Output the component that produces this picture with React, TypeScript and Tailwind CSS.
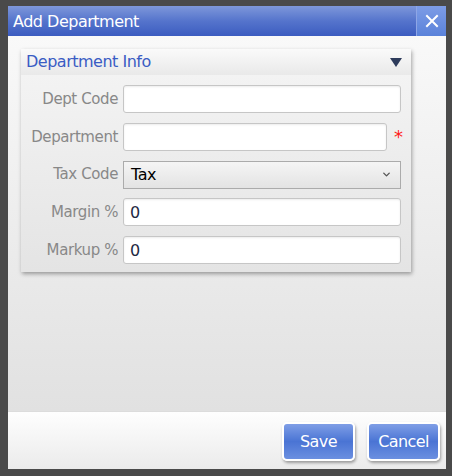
import { ChevronDown } from 'lucide-react';

const font = { fontFamily: '"DejaVu Sans", Verdana, sans-serif' };

type Field = { label: string; value?: string; kind?: 'select'; required?: boolean };

const fields: Field[] = [
  { label: 'Dept Code' },
  { label: 'Department', required: true },
  { label: 'Tax Code', value: 'Tax', kind: 'select' },
  { label: 'Margin %', value: '0' },
  { label: 'Markup %', value: '0' },
];

function FieldRow({ field }: { field: Field }) {
  return (
    <div className="flex h-[28px] items-center">
      <label className="w-[102px] shrink-0 pr-[5px] text-right text-[15px] tracking-[-0.4px] text-[#888]">
        {field.label}
      </label>
      {field.kind === 'select' ? (
        <div className="flex h-[28px] w-[278px] items-center justify-between border border-[#ababab] bg-gradient-to-b from-[#f5f5f5] to-[#e3e3e3] pl-[7px] pr-[8px] text-[16px] tracking-[-0.5px] text-black">
          <span>{field.value}</span>
          <ChevronDown className="h-[11px] w-[11px] text-[#555]" strokeWidth={3} />
        </div>
      ) : (
        <div className="flex items-center">
          <input
            readOnly
            value={field.value ?? ''}
            className={`h-[28px] ${field.required ? 'w-[264px]' : 'w-[278px]'} rounded-[3px] border border-[#c6c6c6] bg-white px-[6px] text-[16px] text-[#1f2a44] shadow-[inset_0_1px_2px_rgba(0,0,0,0.08)] outline-none`}
            style={font}
          />
          {field.required && <span className="ml-[7px] text-[18px] leading-none text-[#ff1a1a]">*</span>}
        </div>
      )}
    </div>
  );
}

export default function App() {
  return (
    <div className="h-[476px] w-[452px] bg-[#4a4a4a] pl-[8px] pt-[6px]" style={font}>
      <div className="flex h-[463px] w-[438px] flex-col">
        <div className="flex h-[30px] bg-gradient-to-b from-[#7e97da] via-[#5574cc] to-[#3c5cc0]">
          <div className="flex-1 pl-[5px] pt-[4px] text-[16px] tracking-[-0.5px] text-white">Add Department</div>
          <button className="flex w-[30px] items-center justify-center border-l border-[#8ea6e6] bg-gradient-to-b from-[#7d9ce6] to-[#5a82da]">
            <svg width="14" height="14" viewBox="0 0 14 14">
              <path d="M2 2 L12 12 M12 2 L2 12" stroke="white" strokeWidth="2" strokeLinecap="square" />
            </svg>
          </button>
        </div>

        <div className="flex-1 bg-gradient-to-b from-[#f9f9f9] to-[#e1e1e1] pl-[13px] pt-[13px]">
          <div className="w-[390px] shadow-[1px_2px_4px_rgba(0,0,0,0.35)]">
            <div className="flex h-[26px] items-center justify-between bg-gradient-to-b from-[#fafafa] to-[#e9e9e9] pl-[5px] pr-[9px]">
              <span className="text-[16px] tracking-[-0.5px] text-[#3a5cc4]">Department Info</span>
              <svg width="12" height="9" viewBox="0 0 12 9">
                <path d="M0 0 H12 L6 9 Z" fill="#2e3c5c" />
              </svg>
            </div>
            <div className="flex flex-col gap-[9.75px] bg-gradient-to-b from-[#f3f3f3] to-[#e4e4e4] pb-[8px] pt-[10px]">
              {fields.map((f) => (
                <FieldRow key={f.label} field={f} />
              ))}
            </div>
          </div>
        </div>

        <div className="flex h-[58px] items-start justify-end gap-[12px] border-t border-[#dcdcdc] bg-gradient-to-b from-[#fefefe] to-[#ebebeb] pr-[6px] pt-[10px]">
          {['Save', 'Cancel'].map((b) => (
            <button
              key={b}
              className="h-[39px] w-[73px] rounded-[5px] border-2 border-white bg-gradient-to-b from-[#7f9ee6] via-[#4a74d4] to-[#6b8fe0] text-[16px] tracking-[-0.6px] text-white shadow-[1px_2px_3px_rgba(0,0,0,0.35)]"
            >
              {b}
            </button>
          ))}
        </div>
      </div>
    </div>
  );
}
